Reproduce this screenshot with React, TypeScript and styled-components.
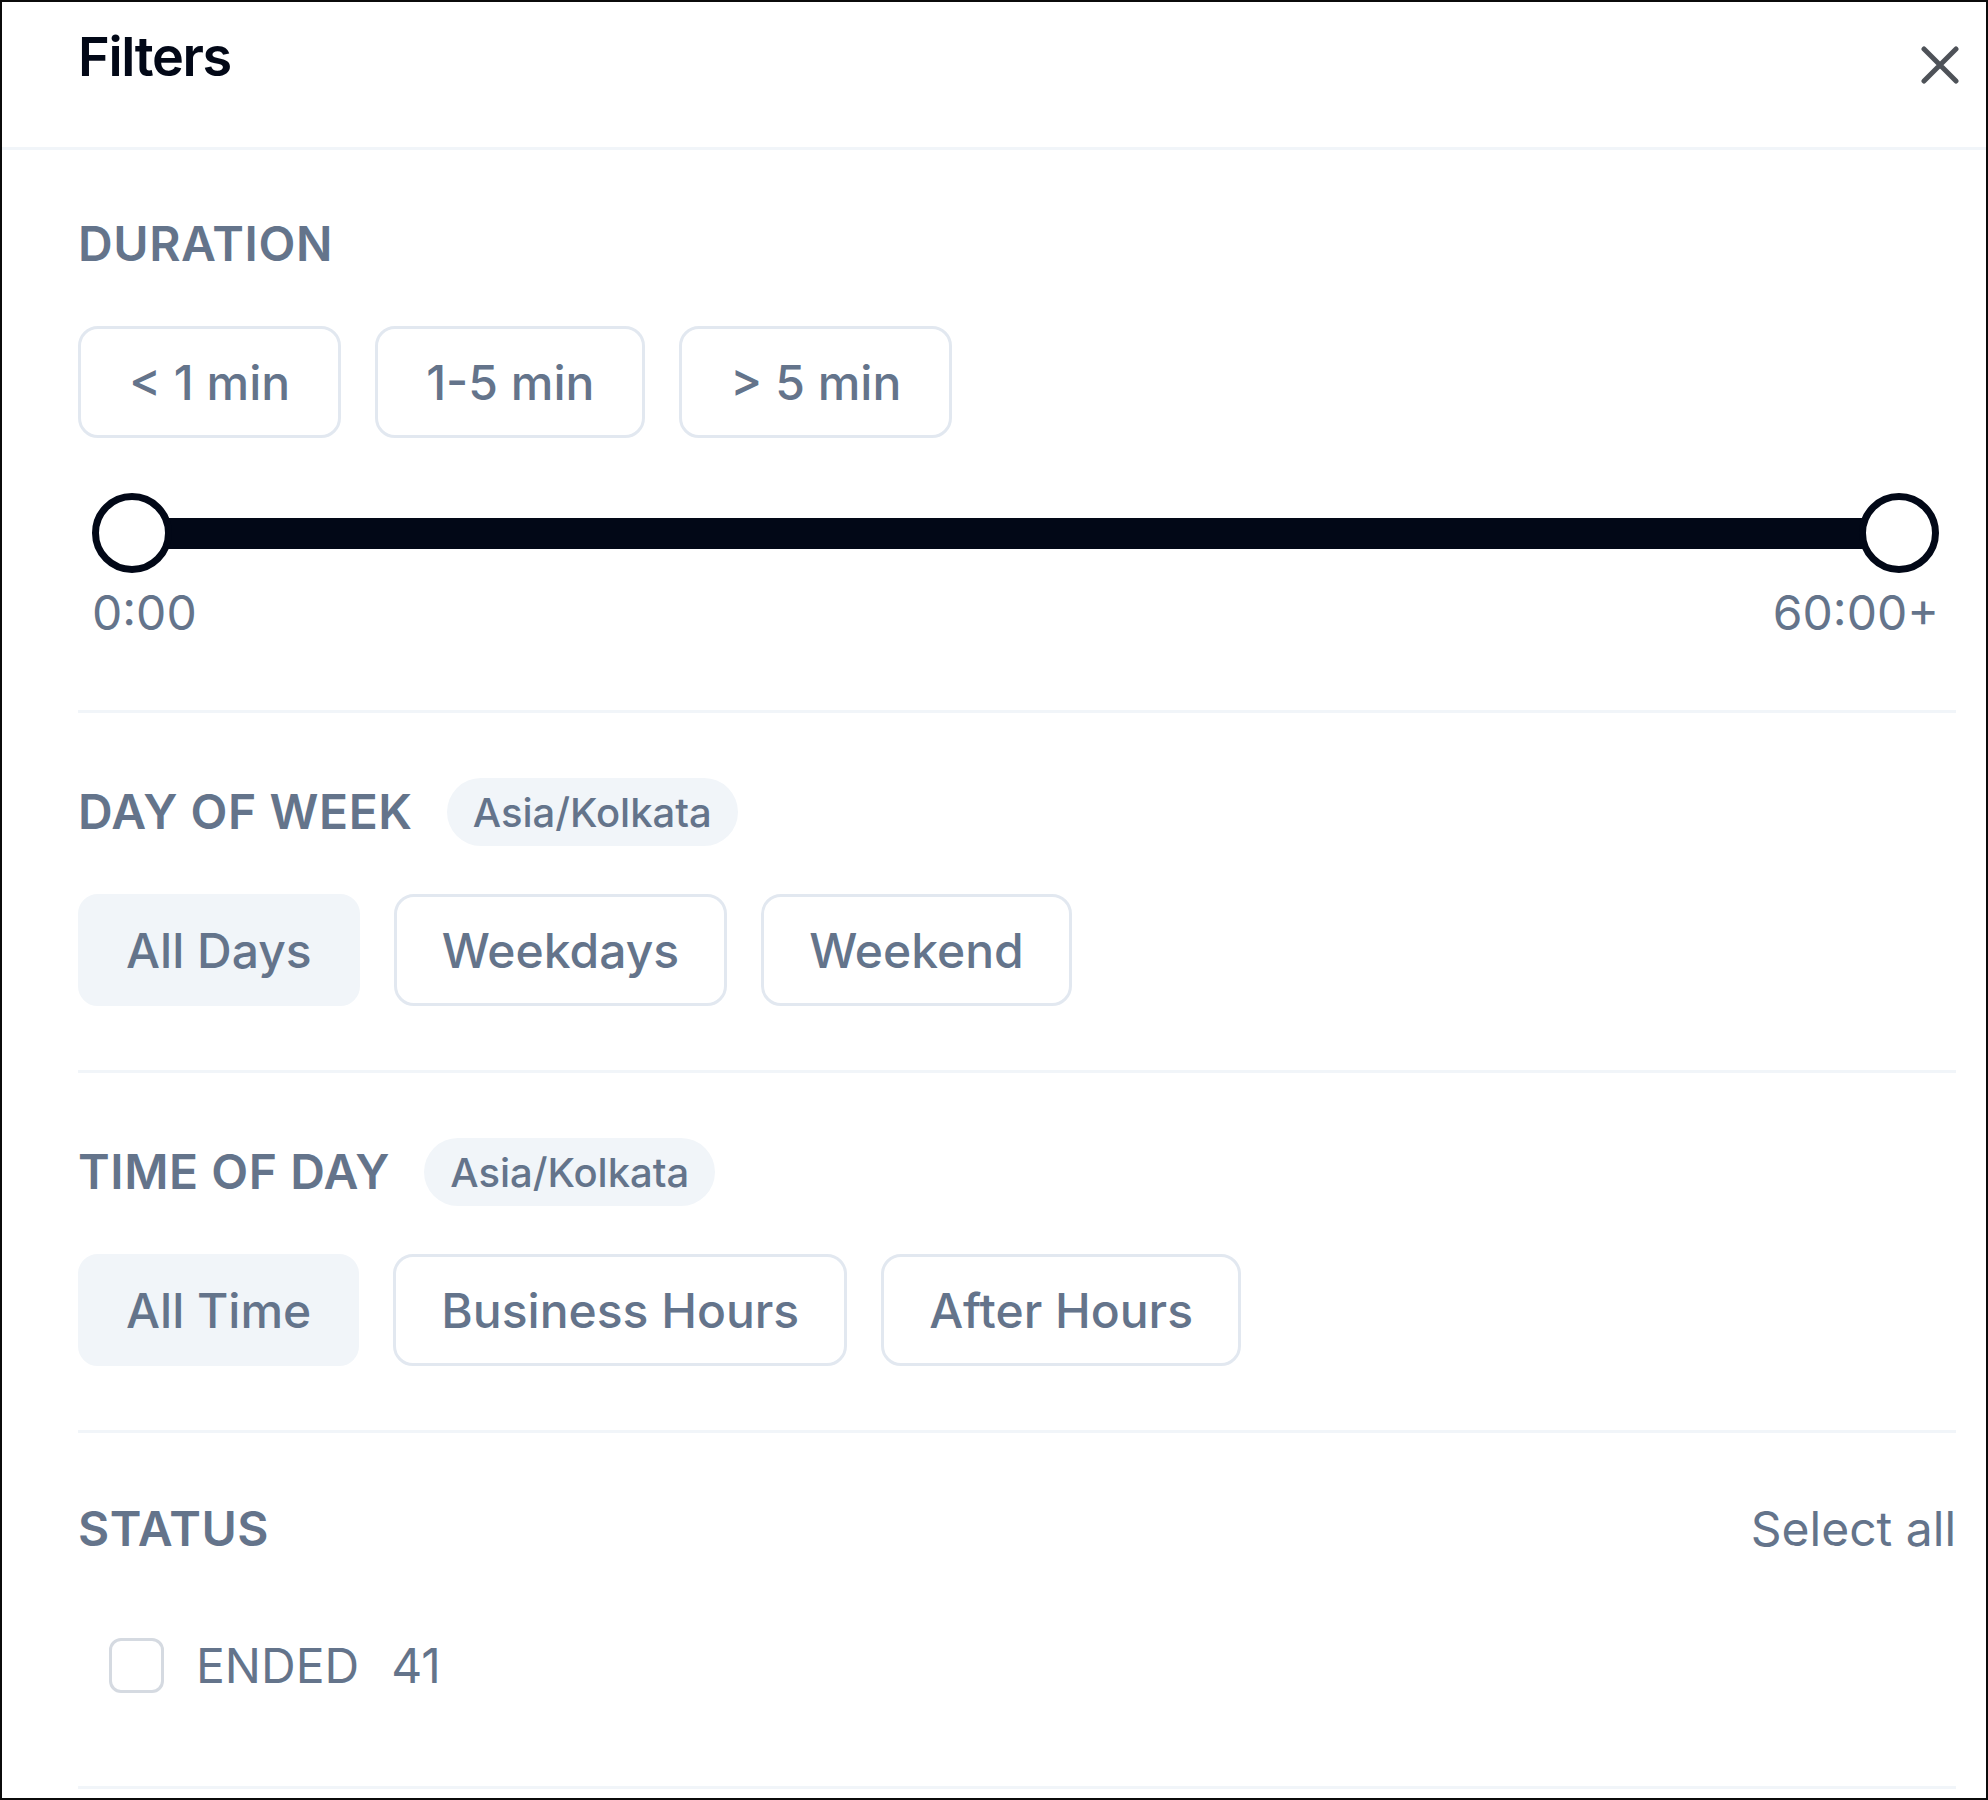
import styled, { createGlobalStyle } from "styled-components";

const GlobalStyle = createGlobalStyle`
  html, body {
    margin: 0;
    padding: 0;
    background: #ffffff;
  }
  body {
    font-family: Inter, "Noto Sans", "Liberation Sans", sans-serif;
    -webkit-font-smoothing: antialiased;
  }
  * {
    box-sizing: border-box;
  }
`;

const durations = ["< 1 min", "1-5 min", "> 5 min"];
const days = ["All Days", "Weekdays", "Weekend"];
const times = ["All Time", "Business Hours", "After Hours"];

const CloseIcon = () => (
  <svg width="38" height="38" viewBox="0 0 38 38" fill="none">
    <path
      d="M3 3L35 35M35 3L3 35"
      stroke="currentColor"
      strokeWidth="5"
      strokeLinecap="round"
    />
  </svg>
);

const App = () => {
  return (
    <>
      <GlobalStyle />
      <Panel>
        <Header>
          <Title>Filters</Title>
          <CloseButton aria-label="Close">
            <CloseIcon />
          </CloseButton>
        </Header>

        <Section $pt={60} $pb={73}>
          <HeadRow>
            <Label>DURATION</Label>
          </HeadRow>
          <ButtonRow>
            {durations.map((d) => (
              <Chip key={d} $wide>
                {d}
              </Chip>
            ))}
          </ButtonRow>
          <SliderBlock>
            <SliderRoot>
              <Thumb />
              <Track />
              <Thumb />
            </SliderRoot>
            <SliderLabels>
              <span>0:00</span>
              <span>60:00+</span>
            </SliderLabels>
          </SliderBlock>
        </Section>

        <Section $pt={65} $pb={64}>
          <HeadRow>
            <LabelGroup>
              <Label>DAY OF WEEK</Label>
              <Badge>Asia/Kolkata</Badge>
            </LabelGroup>
          </HeadRow>
          <ButtonRow>
            {days.map((d, i) => (
              <Chip key={d} $active={i === 0}>
                {d}
              </Chip>
            ))}
          </ButtonRow>
        </Section>

        <Section $pt={65} $pb={64}>
          <HeadRow>
            <LabelGroup>
              <Label>TIME OF DAY</Label>
              <Badge>Asia/Kolkata</Badge>
            </LabelGroup>
          </HeadRow>
          <ButtonRow>
            {times.map((t, i) => (
              <Chip key={t} $active={i === 0}>
                {t}
              </Chip>
            ))}
          </ButtonRow>
        </Section>

        <Section $pt={62} $pb={93}>
          <HeadRow>
            <Label>STATUS</Label>
            <SelectAll>Select all</SelectAll>
          </HeadRow>
          <StatusList>
            <StatusRow>
              <Checkbox />
              <StatusName>ENDED</StatusName>
              <StatusCount>41</StatusCount>
            </StatusRow>
          </StatusList>
        </Section>
      </Panel>
    </>
  );
};

const Panel = styled.div`
  width: 1988px;
  height: 1800px;
  border: 2px solid #0b0b0b;
  background: #ffffff;
  overflow: hidden;
`;

const Header = styled.div`
  height: 148px;
  display: flex;
  justify-content: space-between;
  align-items: flex-start;
  padding: 0 27px 0 76px;
  border-bottom: 3px solid #f1f5f9;
`;

const Title = styled.h2`
  margin: 28px 0 0;
  font-size: 54px;
  line-height: 1;
  font-weight: 600;
  letter-spacing: -0.025em;
  color: #020817;
`;

const CloseButton = styled.button`
  margin-top: 44px;
  padding: 0;
  border: none;
  background: none;
  color: #4e5258;
  display: flex;
  cursor: pointer;
`;

const Section = styled.section<{ $pt: number; $pb: number }>`
  margin: 0 30px 0 76px;
  padding: ${(p) => p.$pt}px 0 ${(p) => p.$pb}px;
  border-bottom: 3px solid #f1f5f9;
  display: flex;
  flex-direction: column;
  gap: 48px;
`;

const HeadRow = styled.div`
  min-height: 68px;
  display: flex;
  align-items: center;
  justify-content: space-between;
`;

const LabelGroup = styled.div`
  display: flex;
  align-items: center;
  gap: 34px;
`;

const Label = styled.span`
  font-size: 48px;
  line-height: 1;
  font-weight: 600;
  letter-spacing: 0.012em;
  color: #64748b;
`;

const Badge = styled.span`
  height: 68px;
  padding: 0 26px;
  border-radius: 34px;
  background: #f1f5f9;
  display: flex;
  align-items: center;
  font-size: 40px;
  font-weight: 500;
  color: #64748b;
`;

const ButtonRow = styled.div`
  display: flex;
  gap: 34px;
`;

const Chip = styled.button<{ $active?: boolean; $wide?: boolean }>`
  height: 112px;
  padding: 0 ${(p) => (p.$wide ? 48 : 45)}px;
  border-radius: 20px;
  border: 3px solid ${(p) => (p.$active ? "#f1f5f9" : "#e2e8f0")};
  background: ${(p) => (p.$active ? "#f1f5f9" : "#ffffff")};
  font-family: Inter, "Noto Sans", sans-serif;
  font-size: 48px;
  font-weight: 500;
  color: #64748b;
  cursor: pointer;
`;

const SliderBlock = styled.div`
  margin-top: 7px;
  padding: 0 17px 0 14px;
  display: flex;
  flex-direction: column;
  gap: 16px;
`;

const SliderRoot = styled.div`
  height: 80px;
  display: flex;
  align-items: center;
`;

const Thumb = styled.span`
  position: relative;
  z-index: 1;
  flex: none;
  width: 80px;
  height: 80px;
  border-radius: 50%;
  border: 7px solid #020817;
  background: #ffffff;
`;

const Track = styled.span`
  flex: 1;
  height: 31px;
  margin: 0 -40px;
  background: #020817;
`;

const SliderLabels = styled.div`
  display: flex;
  justify-content: space-between;
  font-size: 48px;
  line-height: 1;
  color: #64748b;
`;

const SelectAll = styled.button`
  padding: 0;
  border: none;
  background: none;
  font-family: Inter, "Noto Sans", sans-serif;
  font-size: 48px;
  line-height: 1;
  color: #64748b;
  cursor: pointer;
`;

const StatusList = styled.div`
  margin-top: 27px;
  padding-left: 31px;
  display: flex;
  flex-direction: column;
`;

const StatusRow = styled.label`
  height: 55px;
  display: flex;
  align-items: center;
`;

const Checkbox = styled.span`
  width: 55px;
  height: 55px;
  border: 3px solid #d5dae1;
  border-radius: 12px;
  margin-right: 32px;
`;

const StatusName = styled.span`
  font-size: 48px;
  line-height: 1;
  color: #64748b;
`;

const StatusCount = styled.span`
  margin-left: 32px;
  font-size: 48px;
  line-height: 1;
  color: #64748b;
`;

export default App;
